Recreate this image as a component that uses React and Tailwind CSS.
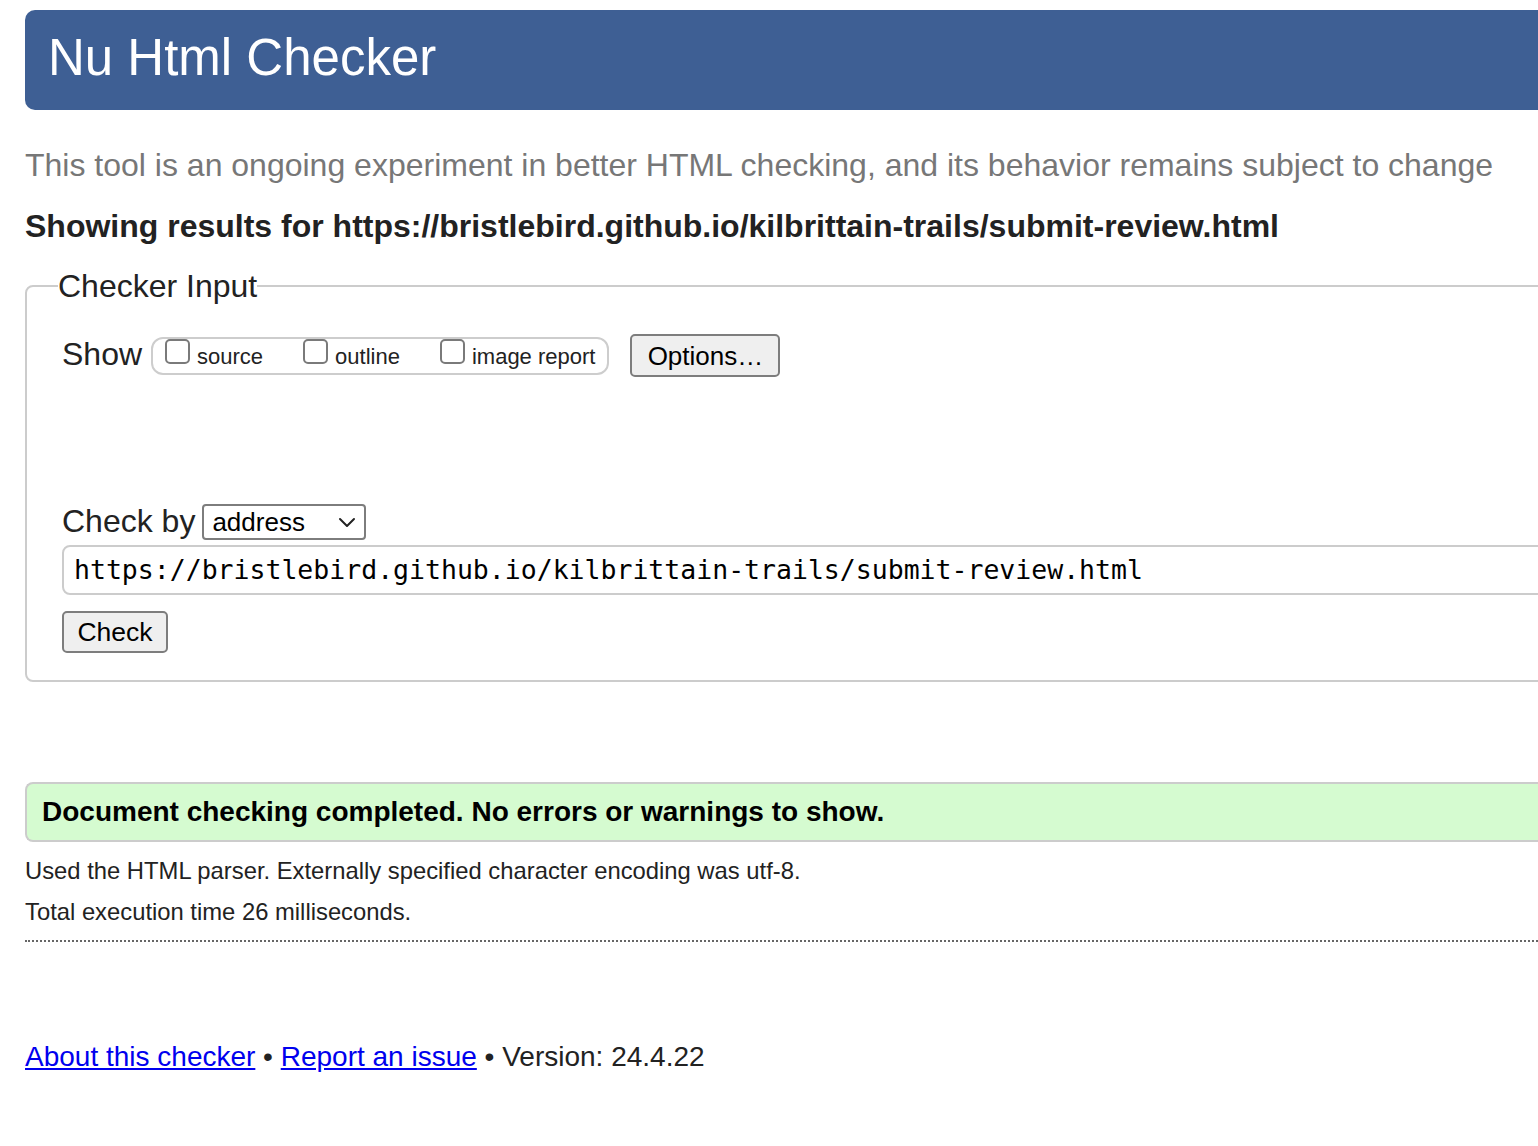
import React from "react";

function Checkbox() {
  return <span className="block w-[25px] h-[25px] shrink-0 rounded-[5px] border-2 border-[#7a7a7a] bg-white" />;
}

function CheckItem({ label }) {
  return (
    <span className="flex items-start gap-[7px]">
      <Checkbox />
      <span className="mt-[6px] text-[22px] leading-[24px] text-[#222]">{label}</span>
    </span>
  );
}

export default function App() {
  return (
    <div className="w-[1538px] h-[1146px] overflow-hidden bg-white text-[#222] font-['Liberation_Sans',Arial,Helvetica,sans-serif]">
      <div className="ml-[25px] w-[1560px] pt-[10px]">
        <header className="h-[100px] bg-[#3e5f94] rounded-[10px] flex items-center pl-[23px] pb-[5px]">
          <h1 className="text-white text-[51px] leading-none font-normal">Nu Html Checker</h1>
        </header>

        <p className="mt-[37px] text-[32px] leading-[36px] text-[#777] whitespace-nowrap">
          This tool is an ongoing experiment in better HTML checking, and its behavior remains subject to change
        </p>

        <p className="mt-[25px] text-[32px] leading-[36px] font-bold whitespace-nowrap text-[#222]">
          Showing results for https://bristlebird.github.io/kilbrittain-trails/submit-review.html
        </p>

        <fieldset className="mt-[24px] border-2 border-[#cccccc] rounded-[8px] pl-[35px] pr-[20px] pb-[27px]">
          <legend className="ml-[-4px] text-[32px] leading-[36px] text-[#222]">Checker Input</legend>

          <div className="mt-[30px] flex items-center h-[43px]">
            <span className="text-[32px] leading-[36px] mb-[4px]">Show</span>
            <div className="ml-[9px] h-[38px] border-2 border-[#cdcdcd] rounded-[12px] pl-[12px] pr-[12px] flex items-start gap-[40px]">
              <CheckItem label="source" />
              <CheckItem label="outline" />
              <CheckItem label="image report" />
            </div>
            <button className="ml-[21px] w-[150px] h-[43px] bg-[#efefef] border-2 border-[#7d7d7d] rounded-[5px] text-[26px] leading-none text-black flex items-center justify-center">
              Options…
            </button>
          </div>

          <div className="mt-[127px] flex items-center h-[36px]">
            <span className="text-[32px] leading-[36px] whitespace-nowrap mb-[2px]">Check by</span>
            <div className="ml-[7px] w-[164px] h-[36px] border-2 border-[#7d7d7d] rounded-[4px] bg-white flex items-center justify-between pl-[8px] pr-[8px]">
              <span className="text-[26px] leading-none text-black">address</span>
              <svg width="18" height="12" viewBox="0 0 18 12" fill="none">
                <path d="M2 3 L9 10 L16 3" stroke="#222" strokeWidth="2" strokeLinecap="round" strokeLinejoin="round" />
              </svg>
            </div>
          </div>

          <div className="mt-[5px] h-[50px] border-2 border-[#cccccc] rounded-[8px] flex items-center pl-[10px]">
            <span className="font-['DejaVu_Sans_Mono',monospace] text-[26.5px] leading-none text-black whitespace-nowrap">
              https://bristlebird.github.io/kilbrittain-trails/submit-review.html
            </span>
          </div>

          <button className="mt-[16px] w-[106px] h-[42px] bg-[#efefef] border-2 border-[#7d7d7d] rounded-[5px] text-[26.5px] leading-none text-black flex items-center justify-center">
            Check
          </button>
        </fieldset>

        <div className="mt-[100px] h-[60px] bg-[#d5fbd0] border-2 border-r-0 border-[#cccccc] rounded-l-[8px] flex items-center pl-[15px]">
          <span className="text-[28px] leading-[32px] font-bold text-black whitespace-nowrap">
            Document checking completed. No errors or warnings to show.
          </span>
        </div>

        <p className="mt-[8px] text-[23.8px] leading-[41px] text-[#222]">
          Used the HTML parser. Externally specified character encoding was utf-8.
        </p>
        <p className="text-[23.8px] leading-[41px] text-[#222]">Total execution time 26 milliseconds.</p>

        <div className="mt-[8px] border-t-2 border-dotted border-[#666]" />

        <p className="mt-[99px] text-[28px] leading-[32px] text-[#222] whitespace-nowrap">
          <a href="#" className="text-[#0000ee] underline">About this checker</a>
          {" • "}
          <a href="#" className="text-[#0000ee] underline">Report an issue</a>
          {" • Version: 24.4.22"}
        </p>
      </div>
    </div>
  );
}
